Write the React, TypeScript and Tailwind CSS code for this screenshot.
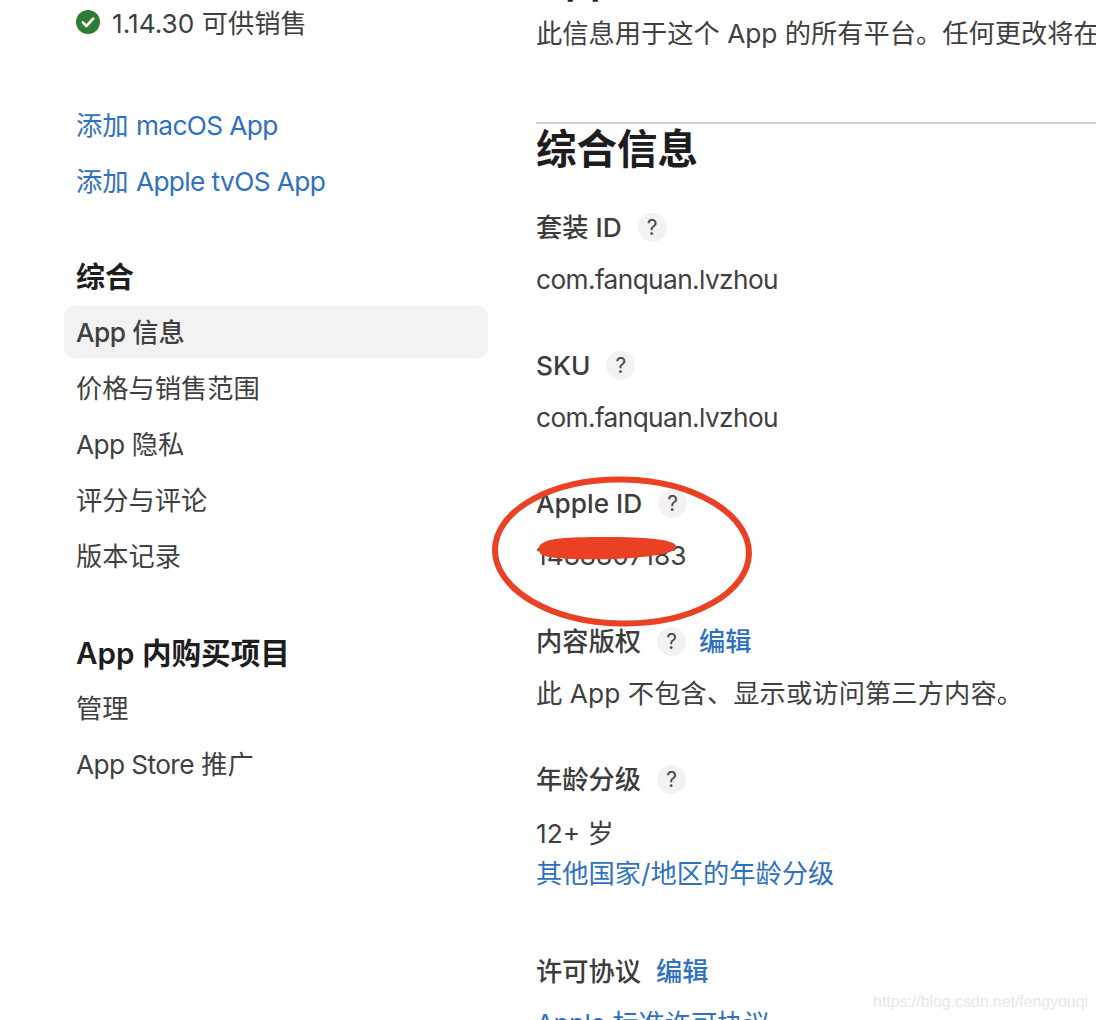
import React from "react";

function Help() {
  return (
    <span className="w-[29px] h-[29px] -translate-y-px rounded-full bg-[#f2f2f2] flex items-center justify-center text-[21px] font-normal leading-none text-[#4a4a4a]">
      ?
    </span>
  );
}

function Label({ text, help = true, edit }: { text: string; help?: boolean; edit?: string }) {
  return (
    <div className="flex items-center h-[36px] font-medium text-[#3c3c3c]">
      <span>{text}</span>
      {help && <span className="ml-4"><Help /></span>}
      {edit && <span className={`text-[#2f70c0] ${help ? "ml-[13px]" : "ml-[15px]"}`}>{edit}</span>}
    </div>
  );
}

function Latin({ children }: { children: React.ReactNode }) {
  return <span className="tracking-[-0.6px]">{children}</span>;
}

function NavItem({ children, active }: { children: React.ReactNode; active?: boolean }) {
  return (
    <div className={`h-[52px] mb-1 pt-[2px] flex items-center px-[13px] rounded-[10px] ${active ? "bg-[#f2f2f2] font-medium" : ""}`}>
      <span className="-ml-px">{children}</span>
    </div>
  );
}

export default function App() {
  return (
    <div
      className="relative w-[1096px] h-[1020px] overflow-hidden bg-white text-[26.25px] text-[#3f3f3f] flex"
      style={{ fontFamily: '"Inter", "Noto Sans CJK SC", sans-serif' }}
    >
      <aside className="w-[536px] shrink-0 pl-[64px]">
        <div className="w-[424px]">
          <div className="flex items-center h-[46px] pl-[12px]">
            <svg width="24" height="24" viewBox="0 0 24 24" className="mr-[12px] -mt-[2px]">
              <circle cx="12" cy="12" r="12" fill="#2f7d32" />
              <path d="M6.8 12.4l3.6 3.6 6.8-7.4" fill="none" stroke="#fff" strokeWidth="2.6" strokeLinecap="round" strokeLinejoin="round" />
            </svg>
            <span className="mt-[2px]">1.14.30 可供销售</span>
          </div>
          <div className="mt-[59px] pl-[12px] text-[#2f70c0]">
            <div className="h-[40px] pt-[2px] flex items-center">
              <span>添加&nbsp;<Latin>macOS App</Latin></span>
            </div>
            <div className="h-[40px] pt-[2px] flex items-center mt-[16px]">
              <span>添加&nbsp;<Latin>Apple tvOS App</Latin></span>
            </div>
          </div>
          <div className="mt-[56px] pl-[12px] h-[40px] pt-[2px] flex items-center text-[29px] font-semibold text-[#1d1d1f]">综合</div>
          <div className="mt-[9px]">
            <NavItem active><Latin>App</Latin> 信息</NavItem>
            <NavItem>价格与销售范围</NavItem>
            <NavItem><Latin>App</Latin> 隐私</NavItem>
            <NavItem>评分与评论</NavItem>
            <NavItem>版本记录</NavItem>
          </div>
          <div className="mt-[51px] pl-[12px] h-[40px] flex items-center text-[29.6px] font-semibold text-[#1d1d1f]">App 内购买项目</div>
          <div className="mt-[9px]">
            <NavItem>管理</NavItem>
            <NavItem><Latin>App Store</Latin> 推广</NavItem>
          </div>
        </div>
      </aside>
      <main className="flex-1 min-w-0 whitespace-nowrap">
        <h1 className="-mt-[45px] h-[50px] leading-[50px] text-[40px] font-semibold text-[#1d1d1f]">App 信息</h1>
        <div className="h-[36px] flex items-center mt-[11px]">此信息用于这个 App 的所有平台。任何更改将在</div>
        <div className="mt-[70px] border-t-2 border-[#d2d2d2]" />
        <h2 className="text-[40.5px] font-semibold text-[#1d1d1f] h-[50px] leading-[52px]">综合信息</h2>
        <div className="mt-[36px]"><Label text="套装 ID" /></div>
        <div className="h-[36px] mt-[16px] flex items-center"><Latin>com.fanquan.lvzhou</Latin></div>
        <div className="mt-[50px]"><Label text="SKU" /></div>
        <div className="h-[36px] mt-[16px] flex items-center"><Latin>com.fanquan.lvzhou</Latin></div>
        <div className="mt-[50px]"><Label text="Apple ID" /></div>
        <div className="h-[36px] mt-[16px] flex items-center">1488807183</div>
        <div className="mt-[50px]"><Label text="内容版权" edit="编辑" /></div>
        <div className="h-[36px] mt-[16px] flex items-center tracking-[0.1px]">此 App 不包含、显示或访问第三方内容。</div>
        <div className="mt-[50px]"><Label text="年龄分级" /></div>
        <div className="h-[36px] mt-[18px] flex items-center">12+ 岁</div>
        <div className="h-[36px] mt-[4px] flex items-center text-[#2f70c0]">其他国家/地区的年龄分级</div>
        <div className="mt-[62px]"><Label text="许可协议" help={false} edit="编辑" /></div>
        <div className="h-[36px] mt-[16px] flex items-center text-[#2f70c0]"><span><Latin>Apple</Latin> 标准许可协议</span></div>
      </main>

      <svg className="absolute left-[485px] top-[470px]" width="275" height="160" viewBox="0 0 275 160">
        <ellipse cx="137" cy="81.5" rx="127" ry="72" fill="none" stroke="#ea4125" strokeWidth="6" transform="rotate(1 137 81)" />
        <path d="M55 75 C62 68 80 67 120 67 C160 67 188 69 191 76 C192 83 170 87 130 89 C95 90 65 89 57 85 C53 82 53 78 55 75Z" fill="#ea4125" />
      </svg>
      <div
        className="absolute right-[8px] top-[992px] text-[15.85px] leading-[20px] text-[#e6e6e6]"
        style={{ fontFamily: '"Liberation Sans", sans-serif' }}
      >
        https://blog.csdn.net/fengyouqi
      </div>
    </div>
  );
}
